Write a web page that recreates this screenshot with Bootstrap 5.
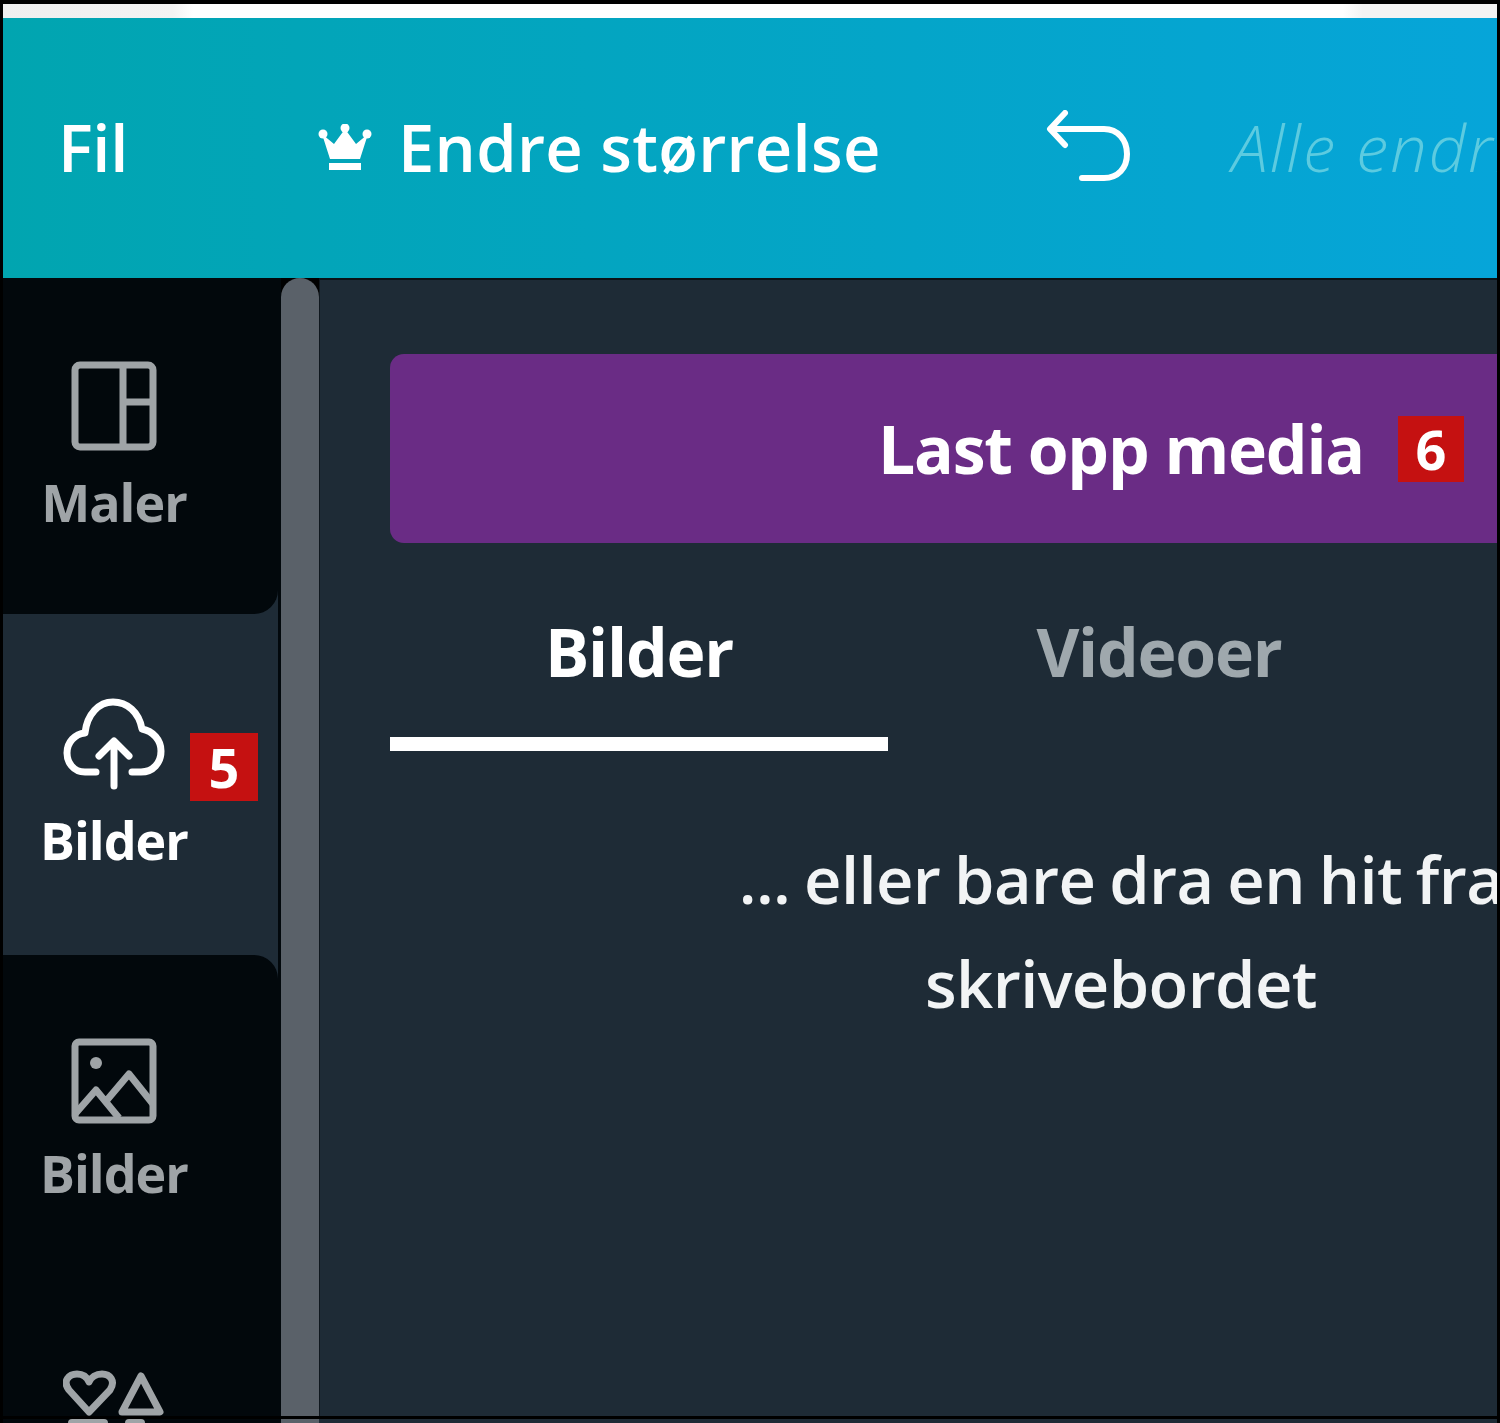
<!DOCTYPE html>
<html lang="no">
<head>
<meta charset="UTF-8">
<title>Last opp media</title>
<link href="https://cdn.jsdelivr.net/npm/bootstrap@5.3.3/dist/css/bootstrap.min.css" rel="stylesheet">
<style>
    html, body { height: 100%; }
    body { background: #000; font-family: "Open Sans", "Liberation Sans", sans-serif; overflow: hidden; }
    .screen-wrap { height: 1423px; padding: 4px 3px 0 3px; }
    .top-strip { height: 14px; flex: none; background: linear-gradient(90deg, #efefef 0, #f3f3f3 170px, #fff 190px, #fff 1340px, #f3f3f3 1360px); }
    .top-bar { height: 260px; flex: none; background: linear-gradient(90deg, #01a5b0, #06a5d9); color: #fff; font-size: 65px; letter-spacing: .3px; font-weight: 600; }
    .top-file { margin-left: 55px; width: 260px; flex: none; letter-spacing: -.3px; }
    .crown-ico { width: 54px; height: 48px; margin-right: 26px; flex: none; }
    .undo-ico { width: 86px; height: 72px; margin-left: 165px; margin-top: -4px; flex: none; }
    .saved-note { margin-left: 100px; color: #5ccbe0; font-style: italic; font-weight: 300; white-space: nowrap; letter-spacing: 2px; }
    .side-col { width: 275px; flex: none; background: #1e2b36; color: #9fa4a7; font-weight: 700; font-size: 52px; letter-spacing: -1px; }
    .side-item { background: #02080c; width: 100%; padding-right: 53px; line-height: 1; }
    .side-maler { height: 336px; padding-top: 83px; border-bottom-right-radius: 24px; }
    .side-upload { height: 341px; padding-top: 84px; background: transparent; color: #fff; }
    .side-photos { height: 461px; padding-top: 83px; border-top-right-radius: 24px; }
    .side-item svg { display: block; flex: none; }
    .ico-tmpl { margin-bottom: 25px; }
    .ico-cloud { margin-bottom: 24px; }
    .ico-img { margin-bottom: 23px; }
    .marker-red { background: #c51111; color: #fff; font-weight: 700; font-size: 54px; letter-spacing: 0; border-radius: 0; padding: 0; display: flex; align-items: center; justify-content: center; line-height: 1; position: absolute; }
    .marker-five { width: 68px; height: 68px; left: 187px; top: 119px; }
    /* .btn .badge in bootstrap sets position relative, needs the extra class here */
    .upload-btn .marker-six { position: absolute; width: 66px; height: 66px; left: 520px; top: 50%; transform: translateY(-50%); }
    .scroll-gap { width: 3px; flex: none; background: #02080c; }
    .scroll-thumb { width: 38px; flex: none; background: #5a6169; border-radius: 19px 19px 0 0; }
    .main-panel { background: #1e2b36; padding: 74px 0 0 70px; border-left: 1px solid #0f171e; border-top: 2px solid #0b1216; }
    .main-inner { width: 1462px; }
    .upload-btn { background: #6a2c85; color: #fff; height: 189px; border: 0; border-radius: 14px; width: 100%; font-size: 66px; font-weight: 700; letter-spacing: -1.2px; padding: 0; }
    .upload-label { position: relative; line-height: 1.2; }
    .tab-row { font-size: 66px; font-weight: 700; letter-spacing: -1.2px; line-height: 1.2; }
    .tab-one { width: 498px; color: #fff; border-bottom: 14px solid #fff; padding-top: 69px; height: 208px; }
    .tab-two { width: 542px; color: #9fa8ad; padding-top: 69px; }
    .hint-text { color: #f2f4f5; font-size: 65px; font-weight: 600; line-height: 104px; letter-spacing: -.6px; word-spacing: -2.5px; margin-top: 76px; }
    .bottom-row { height: 4px; margin-top: 3px; flex: none; }
    .bottom-side { width: 275px; flex: none; background: #02080c; padding-left: 65px; gap: 17px; }
    .bottom-mark { height: 4px; background: #9fa4a7; border-radius: 4px 4px 0 0; }
    .bottom-panel { background: #1e2b36; }
</style>
</head>
<body>
<div class="screen-wrap d-flex flex-column">
    <div class="top-strip"></div>
    <div class="top-bar d-flex align-items-center overflow-hidden">
        <div class="top-file">Fil</div>
        <svg class="crown-ico" viewBox="0 0 54 48" fill="#fff">
            <circle cx="5" cy="10" r="4.5"/><circle cx="27" cy="4" r="4.5"/><circle cx="49" cy="10" r="4.5"/>
            <path d="M4 10 L16 20 L27 5 L38 20 L50 10 L42 35 H12 Z"/>
            <rect x="11" y="39" width="32" height="7"/>
        </svg>
        <div class="text-nowrap">Endre størrelse</div>
        <svg class="undo-ico" viewBox="0 0 86 72" fill="none" stroke="#fff" stroke-width="6" stroke-linecap="round" stroke-linejoin="round">
            <path d="M19 3 L4 19 L19 35"/>
            <path d="M5 19 H58 C72 19 81 30 81 44 C81 58 72 68 58 68 H36"/>
        </svg>
        <div class="saved-note">Alle endringer er lagret</div>
    </div>
    <div class="d-flex flex-grow-1 overflow-hidden">
        <div class="side-col d-flex flex-column">
            <div class="side-item side-maler d-flex flex-column align-items-center">
                <svg class="ico-tmpl" width="86" height="90" viewBox="0 0 86 90" fill="none" stroke="#9fa4a7" stroke-width="7">
                    <rect x="4" y="4" width="78" height="82" rx="5"/>
                    <path d="M52 4 V86 M52 41 H82"/>
                </svg>
                <span>Maler</span>
            </div>
            <div class="side-item side-upload d-flex flex-column align-items-center position-relative">
                <svg class="ico-cloud" width="102" height="92" viewBox="0 0 102 92" fill="none" stroke="#fff" stroke-width="7" stroke-linecap="round" stroke-linejoin="round">
                    <path d="M33 74 H22 C10 74 4 64 4 55 C4 44 12 36 22 35 C24 16 36 4 50 4 C64 4 76 14 79 31 C90 33 98 42 98 53 C98 65 90 74 78 74 H69"/>
                    <path d="M51 88 V44 M36 58 L51 43 L66 58"/>
                </svg>
                <span>Bilder</span>
                <span class="badge marker-red marker-five">5</span>
            </div>
            <div class="side-item side-photos d-flex flex-column align-items-center">
                <svg class="ico-img" width="86" height="86" viewBox="0 0 86 86" fill="none" stroke="#9fa4a7" stroke-width="7" stroke-linejoin="round">
                    <rect x="4" y="4" width="78" height="78" rx="4"/>
                    <circle cx="25" cy="25" r="6" fill="#9fa4a7" stroke="none"/>
                    <path d="M4 76 L25 52 L48 80 M36 62 L58 36 L82 66"/>
                </svg>
                <span>Bilder</span>
                <svg class="mt-auto" width="102" height="46" viewBox="0 0 102 46" fill="none" stroke="#9fa4a7" stroke-width="7" stroke-linejoin="round">
                    <path d="M26 42 L6 20 C-1 11 6 4 14 4 C20 4 24 7 26 12 C28 7 33 4 39 4 C47 4 53 11 47 20 Z"/>
                    <path d="M78 6 L97 42 H59 Z"/>
                </svg>
            </div>
        </div>
        <div class="scroll-gap"></div>
        <div class="scroll-thumb"></div>
        <div class="main-panel flex-grow-1 overflow-hidden">
            <div class="main-inner">
                <button class="btn upload-btn d-flex align-items-center justify-content-center" type="button">
                    <span class="upload-label">Last opp media<span class="badge marker-red marker-six">6</span></span>
                </button>
                <div class="tab-row d-flex text-center">
                    <div class="tab-one">Bilder</div>
                    <div class="tab-two">Videoer</div>
                </div>
                <p class="hint-text text-center">... eller bare dra en hit fra<br>skrivebordet</p>
            </div>
        </div>
    </div>
    <div class="bottom-row d-flex">
        <div class="bottom-side d-flex">
            <div class="bottom-mark" style="width:40px"></div>
            <div class="bottom-mark" style="width:20px"></div>
        </div>
        <div class="scroll-gap"></div>
        <div class="scroll-thumb rounded-0"></div>
        <div class="bottom-panel flex-grow-1"></div>
    </div>
</div>
</body>
</html>
